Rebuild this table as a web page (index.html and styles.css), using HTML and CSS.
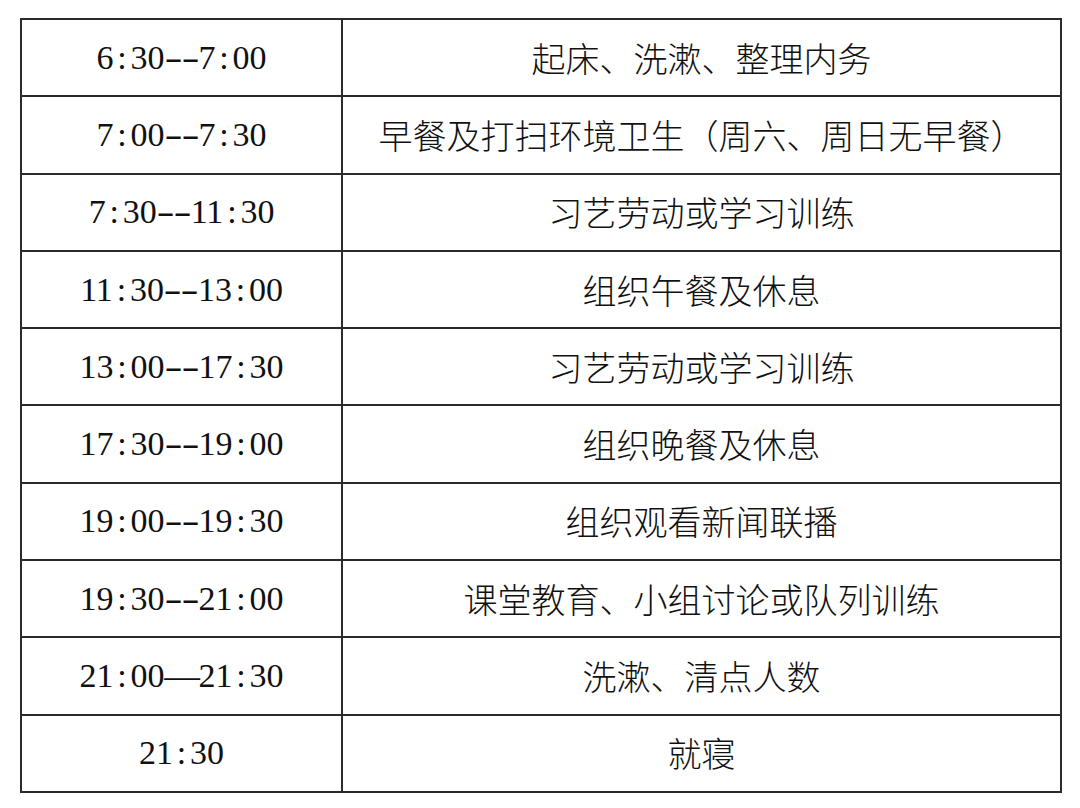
FILE: index.html
```html
<!DOCTYPE html>
<html lang="zh-CN">
<head>
<meta charset="utf-8">
<link rel="stylesheet" href="styles.css">
</head>
<body>
<table class="sched">
<colgroup><col class="c-time"><col class="c-act"></colgroup>
<tbody>
<tr><td class="t">6<span class="p">:</span>30<span class="h">-</span><span class="h">-</span>7<span class="p">:</span>00</td><td class="a">起床、洗漱、整理内务</td></tr>
<tr><td class="t">7<span class="p">:</span>00<span class="h">-</span><span class="h">-</span>7<span class="p">:</span>30</td><td class="a">早餐及打扫环境卫生（周六、周日无早餐）</td></tr>
<tr><td class="t">7<span class="p">:</span>30<span class="h">-</span><span class="h">-</span>11<span class="p">:</span>30</td><td class="a">习艺劳动或学习训练</td></tr>
<tr><td class="t">11<span class="p">:</span>30<span class="h">-</span><span class="h">-</span>13<span class="p">:</span>00</td><td class="a">组织午餐及休息</td></tr>
<tr><td class="t">13<span class="p">:</span>00<span class="h">-</span><span class="h">-</span>17<span class="p">:</span>30</td><td class="a">习艺劳动或学习训练</td></tr>
<tr><td class="t">17<span class="p">:</span>30<span class="h">-</span><span class="h">-</span>19<span class="p">:</span>00</td><td class="a">组织晚餐及休息</td></tr>
<tr><td class="t">19<span class="p">:</span>00<span class="h">-</span><span class="h">-</span>19<span class="p">:</span>30</td><td class="a">组织观看新闻联播</td></tr>
<tr><td class="t">19<span class="p">:</span>30<span class="h">-</span><span class="h">-</span>21<span class="p">:</span>00</td><td class="a">课堂教育、小组讨论或队列训练</td></tr>
<tr><td class="t">21<span class="p">:</span>00<span class="em">—</span>21<span class="p">:</span>30</td><td class="a">洗漱、清点人数</td></tr>
<tr><td class="t">21<span class="p">:</span>30</td><td class="a">就寝</td></tr>
</tbody>
</table>
</body>
</html>
```
FILE: styles.css
```css
html, body {
  margin: 0;
  padding: 0;
  background: #ffffff;
}
body {
  padding: 18px 0 0 20px;
}
.sched {
  border-collapse: collapse;
  width: 1042px;
  table-layout: fixed;
  color: #111111;
}
.c-time { width: 321px; }
.sched td {
  border: 2px solid #2b2b2b;
  height: 75.3px;
  padding: 0;
  text-align: center;
  vertical-align: middle;
  font-size: 34px;
  line-height: 1;
}
.t {
  font-family: "Liberation Serif", "Noto Sans CJK SC", serif;
  padding-bottom: 1px;
}
.a {
  font-family: "Noto Sans CJK SC", "Noto Sans CJK TC", sans-serif;
  font-weight: 300;
  padding-bottom: 4px;
}
.p, .h {
  display: inline-block;
  width: 0.5em;
  text-align: center;
}
.h {
  transform: scaleX(1.6);
}
.em {
  display: inline-block;
  width: 1em;
  text-align: center;
  transform: scaleX(1.05);
}
```
